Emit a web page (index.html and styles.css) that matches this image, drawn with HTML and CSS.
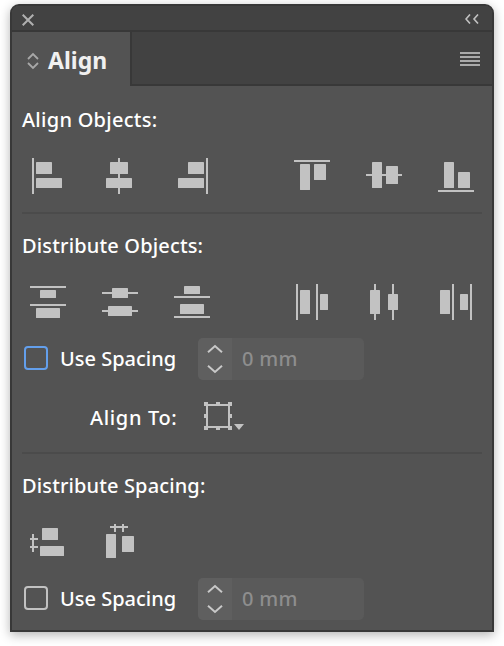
FILE: index.html
```
<!DOCTYPE html>
<html lang="en">
<head>
<meta charset="utf-8">
<title>Align</title>
<link rel="stylesheet" href="styles.css">
</head>
<body>
<main class="panel">
  <header class="titlebar">
    <svg class="close" width="12" height="12" viewBox="0 0 12 12"><path d="M.7 .7L11.300 11.300M11.300 .7L.7 11.300"/></svg>
    <svg class="collapse" width="14" height="10" viewBox="0 0 14 10"><path d="M5 .5L1 5L5 9.500M13 .5L9 5L13 9.500"/></svg>
  </header>
  <div class="tabs">
    <div class="tab">
      <svg class="cycle" width="12" height="18" viewBox="0 0 12 18"><path d="M1 7L6 2L11 7M1 11L6 16L11 11"/></svg>
      <span class="tab-name">Align</span>
    </div>
    <div class="tab-rest">
      <svg class="glyph" width="20" height="14" viewBox="0 0 20 14"><path d="M0 0h20v2H0zM0 4h20v2H0zM0 8h20v2H0zM0 12h20v2H0z"/></svg>
    </div>
  </div>

  <section class="section objects">
    <h2 class="heading w-align">Align Objects:</h2>
    <div class="icons">
      <div class="group">
        <svg class="icon" viewBox="0 0 36 36"><rect x="2" width="2" height="36"/><rect x="6" y="4" width="16" height="12" rx=".6"/><rect x="6" y="20" width="26" height="10" rx=".6"/></svg>
        <svg class="icon" viewBox="0 0 36 36"><rect x="16" width="2" height="36"/><rect x="8" y="4" width="18" height="12" rx=".6"/><rect x="4" y="20" width="26" height="10" rx=".6"/></svg>
        <svg class="icon" viewBox="0 0 36 36"><rect x="32" width="2" height="36"/><rect x="14" y="4" width="16" height="12" rx=".6"/><rect x="4" y="20" width="26" height="10" rx=".6"/></svg>
      </div>
      <div class="group">
        <svg class="icon" viewBox="0 0 36 36"><rect y="2" width="36" height="2"/><rect x="6" y="6" width="10" height="26" rx=".6"/><rect x="20" y="6" width="12" height="16" rx=".6"/></svg>
        <svg class="icon" viewBox="0 0 36 36"><rect y="16" width="36" height="2"/><rect x="6" y="4" width="10" height="26" rx=".6"/><rect x="20" y="8" width="12" height="18" rx=".6"/></svg>
        <svg class="icon" viewBox="0 0 36 36"><rect y="32" width="36" height="2"/><rect x="6" y="4" width="10" height="26" rx=".6"/><rect x="20" y="14" width="12" height="16" rx=".6"/></svg>
      </div>
    </div>
  </section>

  <section class="section distribute">
    <h2 class="heading w-distribute">Distribute Objects:</h2>
    <div class="icons">
      <div class="group">
        <svg class="icon" viewBox="0 0 36 36"><rect y="2" width="36" height="2"/><rect x="10" y="6" width="16" height="8" rx=".6"/><rect y="20" width="36" height="2"/><rect x="6" y="24" width="24" height="10" rx=".6"/></svg>
        <svg class="icon" viewBox="0 0 36 36"><rect y="8" width="36" height="2"/><rect x="10" y="4" width="16" height="10" rx=".6"/><rect y="26" width="36" height="2"/><rect x="6" y="22" width="24" height="10" rx=".6"/></svg>
        <svg class="icon" viewBox="0 0 36 36"><rect x="10" y="2" width="16" height="8" rx=".6"/><rect y="12" width="36" height="2"/><rect x="6" y="20" width="24" height="10" rx=".6"/><rect y="32" width="36" height="2"/></svg>
      </div>
      <div class="group">
        <svg class="icon" viewBox="0 0 36 36"><rect x="2" width="2" height="36"/><rect x="6" y="6" width="10" height="24" rx=".6"/><rect x="22" width="2" height="36"/><rect x="26" y="10" width="8" height="16" rx=".6"/></svg>
        <svg class="icon" viewBox="0 0 36 36"><rect x="8" width="2" height="36"/><rect x="4" y="6" width="10" height="24" rx=".6"/><rect x="26" width="2" height="36"/><rect x="22" y="10" width="10" height="16" rx=".6"/></svg>
        <svg class="icon" viewBox="0 0 36 36"><rect x="2" y="6" width="10" height="24" rx=".6"/><rect x="14" width="2" height="36"/><rect x="22" y="10" width="8" height="16" rx=".6"/><rect x="32" width="2" height="36"/></svg>
      </div>
    </div>
    <div class="spacing">
      <span class="checkbox focused"></span>
      <span class="label">Use Spacing</span>
      <div class="field">
        <div class="stepper"><svg class="chevrons" width="16" height="30" viewBox="0 0 16 30"><path d="M1 8.200L8 2L15 8.200M1 21.800L8 28L15 21.800"/></svg></div>
        <span class="value">0 mm</span>
      </div>
    </div>
    <div class="align-to">
      <span class="label">Align To:</span>
      <svg class="glyph bounds" width="40" height="28" viewBox="0 0 40 28"><path fill-rule="evenodd" d="M2 2h24v24H2zM4 4v20h20V4z"/><path d="M0 0h4v4H0zM12 0h4v4h-4zM24 0h4v4h-4zM0 12h4v4H0zM24 12h4v4h-4zM0 24h4v4H0zM12 24h4v4h-4zM24 24h4v4h-4zM30 22h10l-5 6z"/></svg>
    </div>
  </section>

  <section class="section gaps">
    <h2 class="heading w-gaps">Distribute Spacing:</h2>
    <div class="icons">
      <div class="group">
        <svg class="icon" viewBox="0 0 36 36"><rect x="12" y="4" width="16" height="12" rx=".6"/><rect x="10" y="22" width="24" height="10" rx=".6"/><path d="M2 10h2v4h4v2H4v6h4v2H4v4H2v-4H0v-2h2v-6H0v-2h2z"/></svg>
        <svg class="icon" viewBox="0 0 36 36"><rect x="4" y="10" width="10" height="24" rx=".6"/><rect x="20" y="12" width="12" height="16" rx=".6"/><path d="M8 2h4V0h2v2h6V0h2v2h4v2h-4v4h-2V4h-6v4h-2V4H8z"/></svg>
      </div>
    </div>
    <div class="spacing">
      <span class="checkbox"></span>
      <span class="label">Use Spacing</span>
      <div class="field">
        <div class="stepper"><svg class="chevrons" width="16" height="30" viewBox="0 0 16 30"><path d="M1 8.200L8 2L15 8.200M1 21.800L8 28L15 21.800"/></svg></div>
        <span class="value">0 mm</span>
      </div>
    </div>
  </section>
</main>
</body>
</html>
```
FILE: styles.css
```
* { box-sizing: border-box; }
body {
  margin: 0;
  padding: 4px 10px;
  height: 646px;
  overflow: hidden;
  background: #fff;
  font: 500 20px/28px "Noto Sans", "Open Sans", sans-serif;
  color: #fff;
}
svg { display: block; flex: none; }
.panel {
  width: 484px;
  height: 628px;
  border: 2px solid #383838;
  border-radius: 9px 9px 0 0;
  background: #535353;
  box-shadow: 0 3px 11px rgba(0, 0, 0, .3);
}
.titlebar {
  display: flex;
  justify-content: space-between;
  height: 26px;
  padding: 8px 13px 0 10px;
  border-bottom: 2px solid #383838;
  border-radius: 7px 7px 0 0;
  background: #424242;
}
.close, .collapse, .cycle, .chevrons { fill: none; stroke: #b0b0b0; stroke-width: 2; }
.collapse { stroke: #c2c2c2; stroke-width: 1.6; }
.cycle { stroke: #a8a8a8; stroke-width: 1.8; }
.chevrons { stroke: #c8c8c8; }
.tabs { display: flex; height: 54px; }
.tab { display: flex; align-items: center; gap: 9px; width: 118px; padding: 4px 0 0 15px; }
.tab-name { margin-top: -3px; font-weight: 700; font-size: 23px; color: #f0f0f0; }
.tab-rest {
  flex: 1;
  display: flex;
  justify-content: flex-end;
  padding: 20px 12px 0 0;
  border-left: 2px solid #383838;
  border-bottom: 2px solid #383838;
  background: #424242;
}
.glyph { fill: #aaa; }
.section { margin: 0 10px; }
.objects { height: 128px; padding-top: 20px; border-bottom: 2px solid #4b4b4b; }
.distribute { height: 240px; padding-top: 18px; border-bottom: 2px solid #4b4b4b; }
.gaps { padding-top: 18px; }
.heading { margin: 0; font-size: inherit; font-weight: 500; white-space: nowrap; }
.w-align { letter-spacing: .27px; }
.w-distribute { letter-spacing: .16px; }
.w-gaps { letter-spacing: .13px; }
.label, .value { white-space: nowrap; }
.icons { display: flex; gap: 84px; margin-top: 24px; padding-left: 8px; }
.group { display: flex; gap: 36px; }
.icon { width: 36px; height: 36px; fill: #c2c2c2; }
.spacing { display: flex; align-items: center; margin-top: 18px; height: 42px; padding-left: 2px; }
.checkbox { width: 24px; height: 24px; margin-top: -2px; border: 2px solid #c2c2c2; border-radius: 4px; }
.checkbox.focused { border-color: #639fec; }
.spacing .label { width: 138px; margin-left: 12px; }
.field {
  display: flex;
  align-items: center;
  width: 166px;
  height: 42px;
  overflow: hidden;
  border-radius: 5px;
  background: #5a5a5a;
}
.stepper { display: flex; align-items: center; justify-content: center; width: 34px; height: 42px; background: #5f5f5f; }
.value { margin-left: 10px; color: #8e8e8e; letter-spacing: .3px; }
.align-to { display: flex; align-items: center; height: 28px; margin-top: 22px; padding-left: 68px; }
.align-to .label { width: 114px; padding-top: 4px; letter-spacing: .65px; }
.bounds { fill: #c2c2c2; }
```
